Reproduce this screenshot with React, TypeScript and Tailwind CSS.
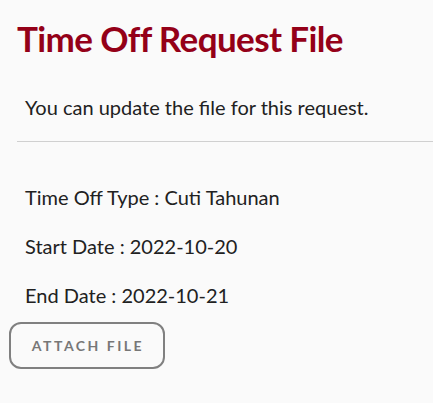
export default function App() {
  return (
    <div className="min-h-[403px] bg-[#fafafa] font-['Lato',sans-serif] text-[#212121]">
      <div className="pl-[17px] pt-[16px]">
        <h1 className="text-[35px] font-bold leading-[44px] tracking-[-0.6px] text-[#940018]">Time Off Request File</h1>
        <p className="mt-[35px] pl-[8px] text-[20px] leading-[24px]">You can update the file for this request.</p>
        <div className="mt-[22px] h-px bg-[#d0d0d0]" />
      </div>
      <div className="flex flex-col gap-[25px] pl-[25px] pt-[43px] text-[20px] leading-[24px]">
        <p>Time Off Type : Cuti Tahunan</p>
        <p>Start Date : 2022-10-20</p>
        <p>End Date : 2022-10-21</p>
      </div>
      <div className="pl-[9px] pt-[15px]">
        <button className="flex h-[47px] w-[156px] items-center justify-center rounded-[12px] border-2 border-[#808080] pl-[2px] text-[14px] font-bold tracking-[2.5px] text-[#777777]">
          ATTACH FILE
        </button>
      </div>
    </div>
  );
}
